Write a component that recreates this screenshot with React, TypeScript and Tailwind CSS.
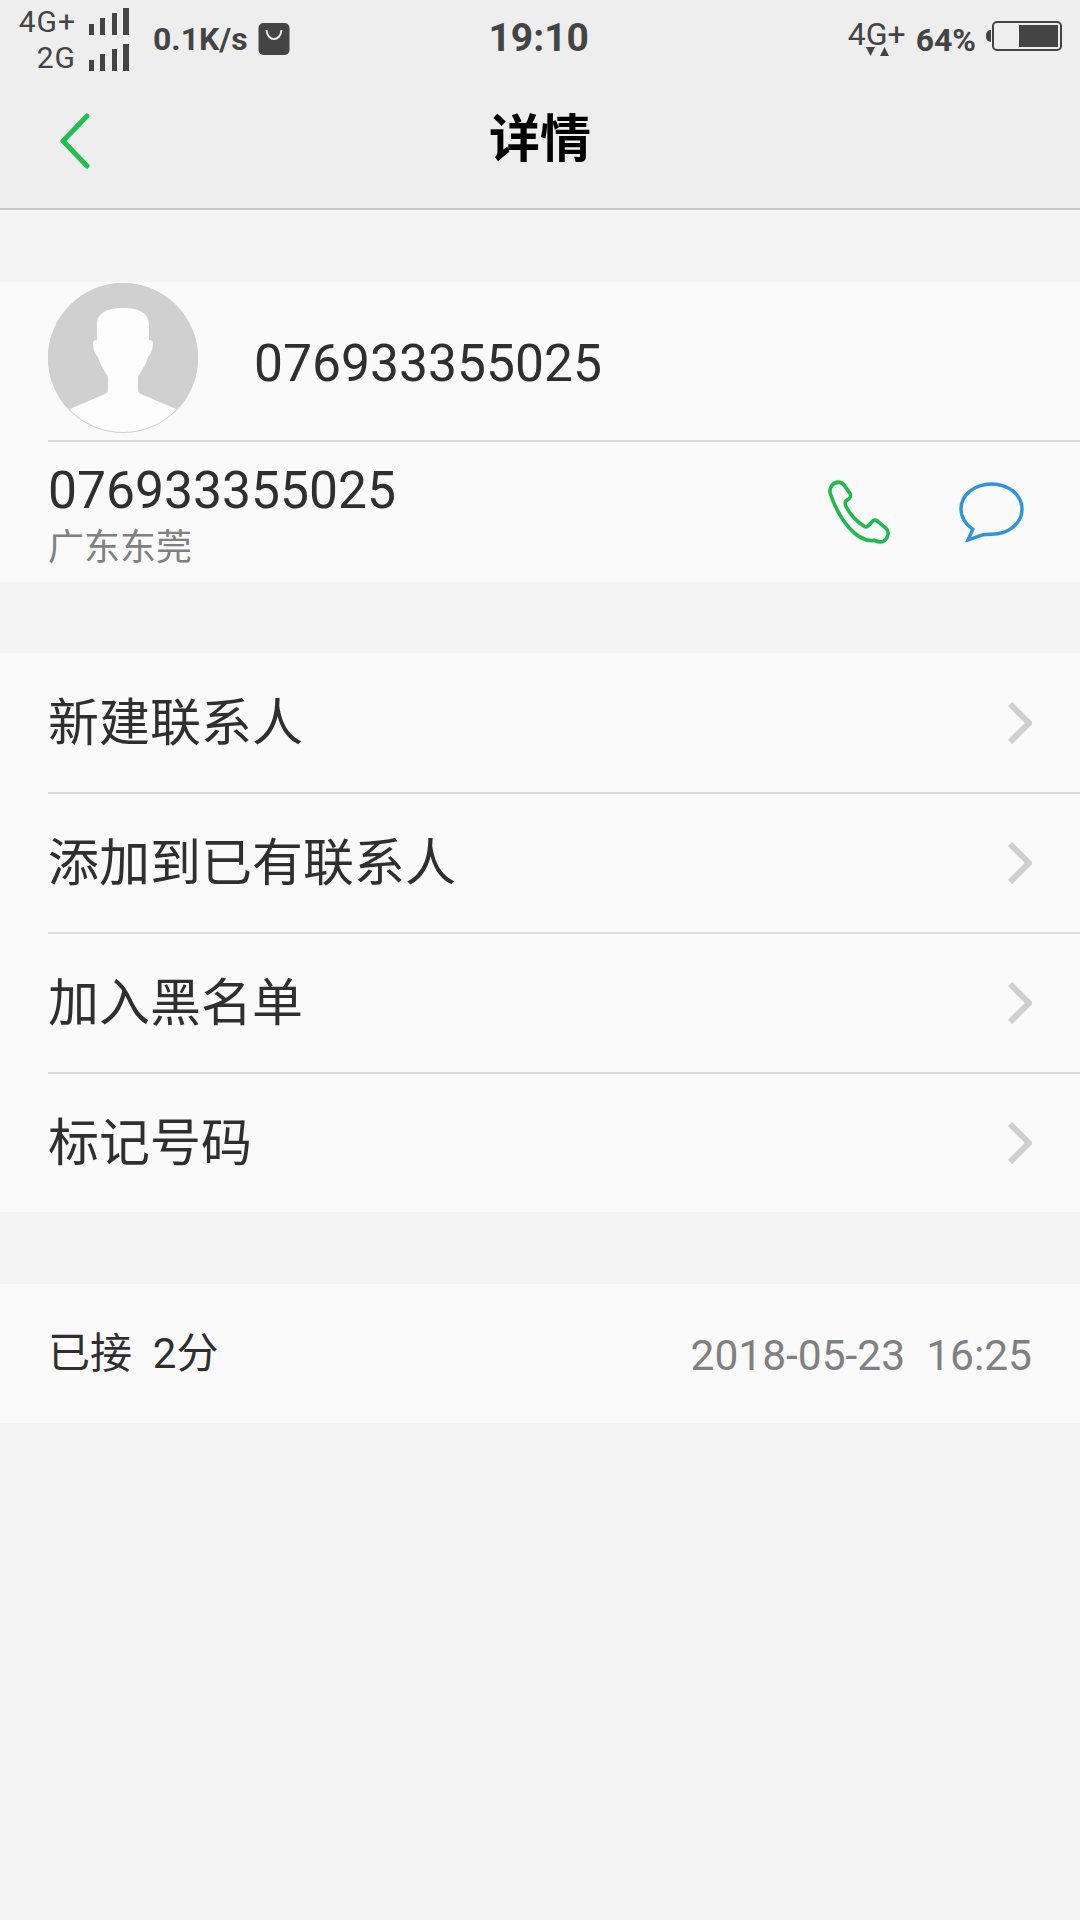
const sans = "font-['Roboto','Noto_Sans_CJK_SC',sans-serif]";

const SignalBars = () => (
  <svg width="40" height="27" viewBox="0 0 40 27" fill="#444444">
    <rect x="0" y="16" width="5" height="11" />
    <rect x="11" y="10" width="5" height="17" />
    <rect x="23" y="5" width="5" height="22" />
    <rect x="34" y="0" width="6" height="27" />
  </svg>
);

const StatusBar = () => (
  <div className="flex h-[76px] items-start justify-between text-[#444444]">
    <div className="flex items-center pl-[17px] pt-[3px]">
      <div className="flex w-[112px] flex-col items-end">
        <div className="flex h-[36px] items-center gap-[13px]">
          <span className="text-[30px] leading-[35px] tracking-[1px]">4G+</span>
          <SignalBars />
        </div>
        <div className="flex h-[36px] items-center gap-[13px]">
          <span className="text-[30px] leading-[35px] tracking-[1px]">2G</span>
          <SignalBars />
        </div>
      </div>
      <span className="ml-[24px] text-[32px] leading-none font-bold">0.1K/s</span>
      <svg className="ml-[10px]" width="32" height="33" viewBox="0 0 31 33">
        <rect width="31" height="32" rx="5" fill="#444444" />
        <path d="M8 7c1 12 14 12 15 0" fill="none" stroke="#eeeeee" strokeWidth="2" />
      </svg>
    </div>
    <span className="mt-[19px] ml-[-60px] text-[39px] leading-none font-bold">19:10</span>
    <div className="flex items-start pt-[18px] pr-[18px]">
      <div className="relative mr-[10px]">
        <span className="text-[32px] leading-none">4G+</span>
        <svg className="absolute top-[28px] left-[18px]" width="24" height="11" viewBox="0 0 24 11" fill="#444444">
          <path d="M0 1h9L4.500 10zM14 10h9l-4.500-9z" />
        </svg>
      </div>
      <span className="mt-[6px] text-[32px] leading-none font-bold">64%</span>
      <div className="mt-[3px] ml-[10px] flex items-center">
        <div className="h-[12px] w-[5px] rounded-l-full bg-[#444444]" />
        <div className="ml-[1px] flex h-[30px] w-[70px] justify-end rounded-[5px] border-2 border-[#444444] p-[2px]">
          <div className="h-full w-[39px] bg-[#444444]" />
        </div>
      </div>
    </div>
  </div>
);

const NavBar = () => (
  <div className="relative flex h-[134px] items-center justify-center border-b-2 border-[#c9c9c9] bg-[#eeeeee] pb-[2px]">
    <svg className="absolute top-[37px] left-[60px]" width="30" height="56" viewBox="0 0 30 56" fill="none" stroke="#1ec050" strokeWidth="5" strokeLinecap="round" strokeLinejoin="round">
      <path d="M27 3 3 28l24 25" />
    </svg>
    <span className="pb-[4px] text-[51px] leading-none font-bold text-black">详情</span>
  </div>
);

const PhoneIcon = () => (
  <svg width="66" height="68" viewBox="0 0 66 62" preserveAspectRatio="none" fill="none" stroke="#1dbb50" strokeWidth="3.500" strokeLinejoin="round">
    <path d="M4 15c-3-6 1-12 8-12 3 0 5 2 7 5l4 5c1 2 1 3-1 5l-3 2c-1 1-1 3 0 5 4 7 11 14 18 18 2 1 3 1 5-1l3-3c2-2 3-2 5-1l9 7c4 3 2 10-3 12-3 1-6 0-9-1C29 58 12 36 4 15Z" />
  </svg>
);

const MessageIcon = () => (
  <svg className="mt-[3px]" width="65" height="60" viewBox="0 0 66 62" preserveAspectRatio="none" fill="none" stroke="#2c94e0" strokeWidth="3.500" strokeLinejoin="miter">
    <path d="M33 2c17 0 31 11 31 26S50 54 33 54c-4 0-7 0-10 1L9 60l5-11C7 44 2 37 2 28 2 13 16 2 33 2Z" />
  </svg>
);

const Chevron = () => (
  <svg width="24" height="42" viewBox="0 0 24 42" fill="none" stroke="#cfcfcf" strokeWidth="6">
    <path d="M2 2l19 19L2 40" />
  </svg>
);

const Avatar = () => (
  <svg width="150" height="150" viewBox="0 0 150 150">
    <defs>
      <clipPath id="avatar-clip">
        <circle cx="75" cy="75" r="75" />
      </clipPath>
    </defs>
    <circle cx="75" cy="75" r="75" fill="#d0d0d0" />
    <path
      clipPath="url(#avatar-clip)"
      d="M49 57V42c0-12 10-17 26-17s26 5 26 17v15c3 0 4 1 4 3 0 6-2 11-5 14-2 8-7 14-10 20v13c0 2 1 3 3 4l35 15v24H22v-24l35-15c2-1 3-2 3-4V94c-3-6-8-12-10-20-3-3-5-8-5-14 0-2 1-3 4-3Z"
      fill="#fdfdfd"
    />
    <circle cx="75" cy="75" r="74.500" fill="none" stroke="#d0d0d0" strokeWidth="1" />
  </svg>
);

const actions = ["新建联系人", "添加到已有联系人", "加入黑名单", "标记号码"];

export default function App() {
  return (
    <div className={`flex min-h-[1920px] w-[1080px] flex-col bg-[#f4f4f4] ${sans}`}>
      <div className="bg-[#eeeeee]">
        <StatusBar />
      </div>
      <NavBar />

      <section className="mt-[72px] bg-[#fafafa]">
        <div className="flex h-[158px] pl-[48px]">
          <div className="pt-[1px]">
            <Avatar />
          </div>
          <span className="mt-[56px] ml-[56px] text-[51.600px] leading-none text-[#2f2f2f]">076933355025</span>
        </div>
        <div className="ml-[48px] border-t-2 border-[#dddddd]" />
        <div className="flex h-[140px] items-start justify-between pr-[56px] pl-[48px]">
          <div>
            <div className="mt-[23px] text-[51.600px] leading-none text-[#2f2f2f]">076933355025</div>
            <div className="mt-[13px] text-[36px] leading-none text-[#808080]">广东东莞</div>
          </div>
          <div className="mt-[37px] flex gap-[66px]">
            <PhoneIcon />
            <MessageIcon />
          </div>
        </div>
      </section>

      <section className="mt-[71px] bg-[#fafafa] pt-[1px]">
        {actions.map((label, i) => (
          <div key={label} className="pl-[48px]">
            <div className="flex h-[138px] items-center justify-between pr-[48px]">
              <span className="text-[51px] leading-none text-[#2f2f2f]">{label}</span>
              <Chevron />
            </div>
            {i < actions.length - 1 && <div className="border-t-2 border-[#dddddd]" />}
          </div>
        ))}
      </section>

      <section className="mt-[72px] flex h-[139px] items-center justify-between bg-[#fafafa] pr-[48px] pl-[48px]">
        <span className="text-[42px] leading-none whitespace-pre text-[#2f2f2f]">已接  2分</span>
        <span className="pt-[5px] text-[42.500px] leading-none whitespace-pre text-[#808080]">2018-05-23  16:25</span>
      </section>
    </div>
  );
}
